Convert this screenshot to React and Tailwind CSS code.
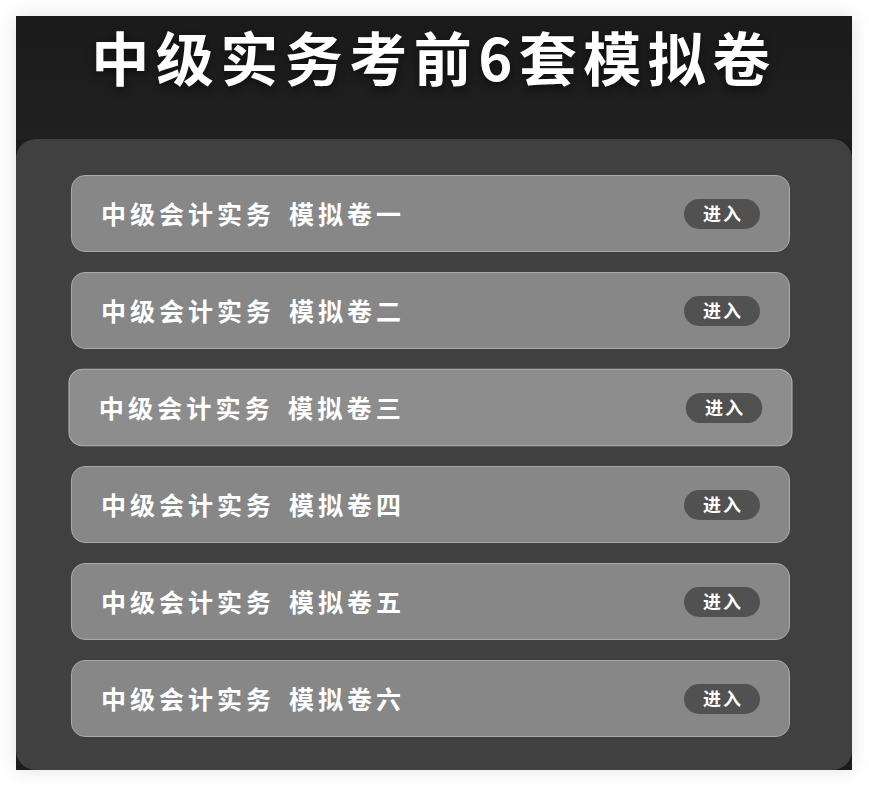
import React from "react";

const papers = ["一", "二", "三", "四", "五", "六"];

const PaperRow = ({ num, active }) => {
  return (
    <div
      className={`flex h-[77px] w-[719px] items-center justify-between rounded-[14px] border pl-[29px] pr-[29px] ${
        active
          ? "scale-[1.007] border-[#b3b3b3] bg-[#8d8d8d]"
          : "border-[#a9a9a9] bg-[#878787]"
      }`}
    >
      <span className="text-[25px] font-bold tracking-[4px] text-white">
        中级会计实务<span className="ml-[14px]">模拟卷{num}</span>
      </span>
      <button className="flex h-[30px] w-[76px] items-center justify-center rounded-full bg-[#515151] pl-[2px] text-[18px] font-bold tracking-[2px] text-white">
        进入
      </button>
    </div>
  );
};

export default function App() {
  return (
    <div
      className="min-h-[786px] bg-white p-4"
      style={{ fontFamily: '"Noto Sans CJK SC", "Noto Sans", sans-serif' }}
    >
      <div className="w-[836px] bg-[#1c1c1c] shadow-[0_0_18px_rgba(0,0,0,0.12)]">
        {/* Header */}
        <div className="h-[123px] bg-gradient-to-b from-[#1b1b1b] to-[#202020] pt-[11px] text-center">
          <h1 className="text-[58px] font-bold leading-[58px] tracking-[6.5px] text-white [text-shadow:0_3px_10px_rgba(0,0,0,0.6)]">
            中级实务考前6套模拟卷
          </h1>
        </div>

        {/* Paper list */}
        <div className="flex flex-col gap-5 rounded-[20px] bg-[#404040] pb-[33px] pl-[55px] pt-[36px]">
          {papers.map((num, i) => (
            <PaperRow key={num} num={num} active={i === 2} />
          ))}
        </div>
      </div>
    </div>
  );
}
